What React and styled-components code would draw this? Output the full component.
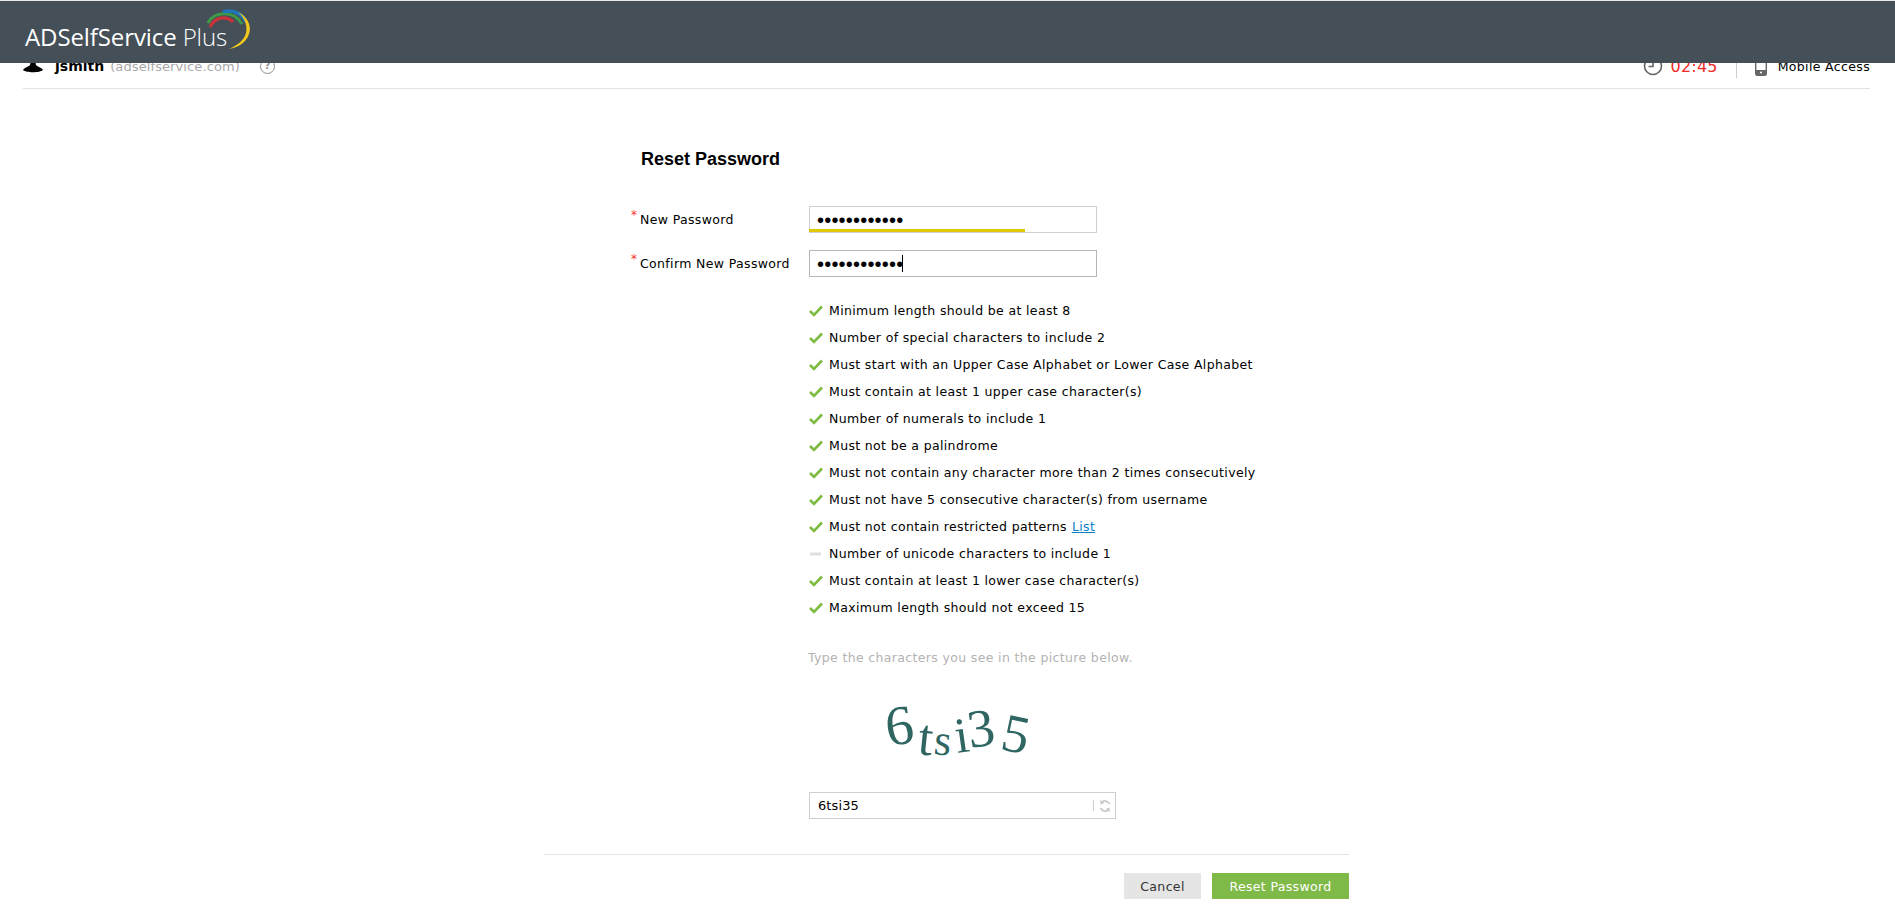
import React from "react";
import styled, { createGlobalStyle } from "styled-components";

const Global = createGlobalStyle`
  html, body { margin: 0; padding: 0; background: #fff; }
  body { font-family: "DejaVu Sans", Verdana, sans-serif; font-size: 12.5px; letter-spacing: 0.35px; color: #000; height: 911px; overflow: hidden; }
`;

const Page = styled.div`position: relative; height: 911px; overflow: hidden;`;
const Header = styled.header`
  position: absolute; top: 0; left: 0; right: 0; height: 62px;
  background: #454f57; border-top: 1px solid #e8e8e8;
  display: flex; align-items: center; padding-left: 25px;
`;
const Logo = styled.div`position: relative; width: 230px; height: 62px;`;
const LogoText = styled.span`
  position: absolute; left: 0; top: 21px; color: #fff;
  font-family: "Open Sans", sans-serif; font-size: 24px; line-height: 30px; letter-spacing: -0.1px; white-space: nowrap;
`;
const LogoLight = styled.span`font-weight: 300;`;
const LogoArc = styled.svg`position: absolute; left: 180px; top: 8px;`;

const UserBar = styled.div`
  margin: 0 25px 0 23px; height: 88px; border-bottom: 1px solid #e3e3e3;
  display: flex; align-items: flex-end; justify-content: space-between;
`;
const UserLeft = styled.div`display: flex; align-items: center; height: 40px; margin-bottom: 2px;`;
const Avatar = styled.svg`margin-right: 12px;`;
const UserName = styled.span`font-weight: 700; font-size: 14px; letter-spacing: 0;`;
const Domain = styled.span`color: #a9a9a9; margin-left: 6px; font-size: 13px; letter-spacing: 0.1px;`;
const Help = styled.span`
  width: 13px; height: 13px; border: 1.5px solid #8f8f8f; border-radius: 50%; margin-left: 20px;
  display: inline-flex; align-items: center; justify-content: center; color: #8f8f8f; font-size: 10px; font-weight: 700; line-height: 1; letter-spacing: 0;
`;
const UserRight = styled.div`display: flex; align-items: center; height: 40px; margin-bottom: 2px;`;
const Timer = styled.span`color: #f02b2b; font-size: 16px; margin-left: 8px; letter-spacing: 0.2px;`;
const Divider = styled.span`width: 1px; height: 24px; background: #ccc; margin: 0 18px;`;
const MobileText = styled.span`margin-left: 11px;`;

const Form = styled.main`margin-left: 544px; width: 805px;`;
const Title = styled.h1`
  margin: 60px 0 0 97px; font: 700 18px/20px "Liberation Sans", Arial, sans-serif; height: 20px; letter-spacing: 0;
`;
const FieldRow = styled.div`
  display: flex; align-items: center; height: 27px; margin-top: ${p => p.$mt}px; padding-left: 87px;
`;
const Label = styled.label`position: relative; width: 178px; padding-left: 9px; box-sizing: border-box; white-space: nowrap;`;
const Star = styled.span`position: absolute; left: 0; top: -4px; color: #f33; font-size: 12px;`;
const PassBox = styled.div`
  position: relative; width: 288px; height: 27px; box-sizing: border-box; background: #fff;
  border: 1px solid ${p => p.$focus ? "#b5b5b5" : "#cfcfcf"};
  display: flex; align-items: center; padding-left: 7px;
`;
const Dots = styled.span`font-family: "Liberation Sans", sans-serif; font-size: 20px; letter-spacing: 0.2px; color: #000; line-height: 1;`;
const Caret = styled.span`width: 1px; height: 17px; background: #000; margin-left: -1px;`;
const Strength = styled.div`position: absolute; left: -1px; bottom: 0; height: 3px; width: 216px; background: #e0c900;`;

const Rules = styled.ul`list-style: none; margin: 20px 0 0 265px; padding: 0;`;
const Rule = styled.li`display: flex; align-items: center; height: 27px; white-space: nowrap;`;
const RuleIcon = styled.svg`width: 14px; height: 12px; margin-right: 6px; flex: none;`;
const Link = styled.a`color: #0b7fc7; text-decoration: underline; margin-left: 5px;`;

const Hint = styled.p`margin: 29px 0 0 264px; color: #b3b3b3; line-height: 16px; height: 16px;`;
const Captcha = styled.svg`display: block; margin: 30px 0 0 336px; overflow: visible;`;
const CaptchaBox = styled.div`
  margin: 34px 0 0 265px; width: 307px; height: 27px; box-sizing: border-box; border: 1px solid #cfcfcf;
  display: flex; align-items: center; padding: 0 4px 0 8px; font-size: 13px; letter-spacing: 0.1px; color: #000;
`;
const CaptchaValue = styled.span`flex: 1;`;
const RefreshSep = styled.span`width: 1px; height: 11px; background: #ccc; margin-right: 5px;`;

const Footer = styled.div`
  margin-top: 35px; border-top: 1px solid #e3e3e3; padding-top: 18px;
  display: flex; justify-content: flex-end; gap: 11px;
`;
const Button = styled.button`
  height: 26px; border: 0; padding: 0; width: ${p => p.$w}px;
  background: ${p => p.$primary ? "#7fba48" : "#e5e5e5"}; color: ${p => p.$primary ? "#fff" : "#333"};
  font: 12.5px "DejaVu Sans", sans-serif; letter-spacing: 0.35px;
`;

const Check = () => (
  <RuleIcon viewBox="0 0 14 12"><path d="M1 6 L5 10 L13 1.5" fill="none" stroke="#7dbb42" strokeWidth="2.6" /></RuleIcon>
);
const Dash = () => (
  <RuleIcon viewBox="0 0 14 12"><rect x="1" y="4.5" width="11" height="3" fill="#e0e0e0" /></RuleIcon>
);

const rules = [
  ["Minimum length should be at least 8", 1],
  ["Number of special characters to include 2", 1],
  ["Must start with an Upper Case Alphabet or Lower Case Alphabet", 1],
  ["Must contain at least 1 upper case character(s)", 1],
  ["Number of numerals to include 1", 1],
  ["Must not be a palindrome", 1],
  ["Must not contain any character more than 2 times consecutively", 1],
  ["Must not have 5 consecutive character(s) from username", 1],
  ["Must not contain restricted patterns", 1, true],
  ["Number of unicode characters to include 1", 0],
  ["Must contain at least 1 lower case character(s)", 1],
  ["Maximum length should not exceed 15", 1],
];

const captchaChars = [
  ["6", 8, 50, -8, 56], ["t", 37, 58, 6, 52], ["s", 53, 58, 6, 44], ["i", 77, 57, -8, 50], ["3", 90, 52, -8, 54], ["5", 119, 53, 12, 54],
];

export default function App() {
  return (
    <Page>
      <Global />
      <UserBar>
        <UserLeft>
          <Avatar width="20" height="14" viewBox="0 0 20 14"><path d="M0 11 C2 8 5 8 7 6 L8 1 L10 4 L12 1 L13 6 C15 8 18 8 20 11 C17 14 3 14 0 11Z" fill="#000" /></Avatar>
          <UserName>jsmith</UserName>
          <Domain>(adselfservice.com)</Domain>
          <Help>?</Help>
        </UserLeft>
        <UserRight>
          <svg width="20" height="20" viewBox="0 0 20 20"><circle cx="10" cy="10" r="8.5" fill="none" stroke="#666" strokeWidth="1.6" /><path d="M10 5v5.5H5.5" fill="none" stroke="#666" strokeWidth="1.6" /></svg>
          <Timer>02:45</Timer>
          <Divider />
          <svg width="12" height="20" viewBox="0 0 12 20"><rect x="0.7" y="0.7" width="10.6" height="18.6" rx="1.5" fill="none" stroke="#666" strokeWidth="1.4" /><rect x="1" y="14" width="10" height="5" fill="#666" /><circle cx="6" cy="16.5" r="1" fill="#fff" /></svg>
          <MobileText>Mobile Access</MobileText>
        </UserRight>
      </UserBar>
      <Form>
        <Title>Reset Password</Title>
        <FieldRow $mt={37}>
          <Label><Star>*</Star>New Password</Label>
          <PassBox><Dots>••••••••••••</Dots><Strength /></PassBox>
        </FieldRow>
        <FieldRow $mt={17}>
          <Label><Star>*</Star>Confirm New Password</Label>
          <PassBox $focus><Dots>••••••••••••</Dots><Caret /></PassBox>
        </FieldRow>
        <Rules>
          {rules.map(([text, ok, link]) => (
            <Rule key={text}>
              {ok ? <Check /> : <Dash />}
              {text}
              {link && <Link>List</Link>}
            </Rule>
          ))}
        </Rules>
        <Hint>Type the characters you see in the picture below.</Hint>
        <Captcha width="145" height="62" viewBox="0 0 145 62">
          {captchaChars.map(([c, x, y, r, s]) => (
            <text key={c + x} x={x} y={y} fontFamily="Liberation Serif, serif" fontSize={s} fill="#2f6662" letterSpacing="0" transform={`rotate(${r} ${x} ${y})`}>{c}</text>
          ))}
        </Captcha>
        <CaptchaBox>
          <CaptchaValue>6tsi35</CaptchaValue>
          <RefreshSep />
          <svg width="12" height="14" viewBox="0 0 12 14"><path d="M10.5 5A5 5 0 0 0 2.5 3.2M1.5 9A5 5 0 0 0 9.5 10.8" fill="none" stroke="#c9c9c9" strokeWidth="1.8" /><path d="M1 1 L1.5 5.5 L5.5 4Z M11 13 L10.5 8.5 L6.5 10Z" fill="#c9c9c9" /></svg>
        </CaptchaBox>
        <Footer>
          <Button $w={77}>Cancel</Button>
          <Button $w={137} $primary>Reset Password</Button>
        </Footer>
      </Form>
      <Header>
        <Logo>
          <LogoText>ADSelfService <LogoLight>Plus</LogoLight></LogoText>
          <LogoArc width="52" height="44" viewBox="0 0 52 44">
            <path d="M5 18 C10 8 21 6 28 13" fill="none" stroke="#c8333b" strokeWidth="3.2" />
            <path d="M3 14 C8 3 28 0 37 15" fill="none" stroke="#3f9a48" strokeWidth="3.2" />
            <path d="M18 3 C27 0 37 4 41 13" fill="none" stroke="#1f76b8" strokeWidth="3.6" />
            <path d="M33 3 C45 9 49 22 40 32 C35 37 30 39 24 40 C33 36 39 31 41 24 C43 16 39 8 33 3Z" fill="#f2c81c" />
          </LogoArc>
        </Logo>
      </Header>
    </Page>
  );
}
